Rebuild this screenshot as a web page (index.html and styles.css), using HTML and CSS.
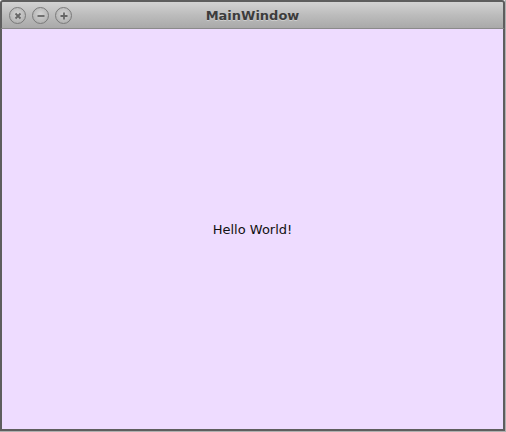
FILE: index.html
```html
<!DOCTYPE html>
<html>
<head>
<meta charset="utf-8">
<link rel="stylesheet" href="styles.css">
</head>
<body>
<div class="window">
  <div class="titlebar">
    <div class="buttons">
      <span class="btn">
        <svg width="16" height="16" viewBox="0 0 16 16"><path d="M5.5 5.5 L10.5 10.5 M10.5 5.5 L5.5 10.5" stroke="#666" stroke-width="1.8"/></svg>
      </span>
      <span class="btn">
        <svg width="16" height="16" viewBox="0 0 16 16"><path d="M4.5 8 H11.5" stroke="#666" stroke-width="1.8"/></svg>
      </span>
      <span class="btn">
        <svg width="16" height="16" viewBox="0 0 16 16"><path d="M4.5 8 H11.5 M8 4.5 V11.5" stroke="#666" stroke-width="1.8"/></svg>
      </span>
    </div>
    <div class="title">MainWindow</div>
  </div>
  <div class="content">
    <div class="label">Hello World!</div>
  </div>
</div>
</body>
</html>
```
FILE: styles.css
```css
html, body {
  margin: 0;
  padding: 0;
  width: 506px;
  height: 432px;
  overflow: hidden;
  background: #ffffff;
}
.window {
  width: 506px;
  height: 432px;
  box-sizing: border-box;
  border: 1px solid #b0b0b0;
  border-top: none;
  border-left: none;
  display: flex;
  flex-direction: column;
}
.titlebar {
  flex: none;
  position: relative;
  background: linear-gradient(#d3d3d3, #bcbcbc 50%, #a9a9a9);
  border: 2px solid #5e5e5e;
  border-bottom: 1px solid #8a8a8a;
  border-radius: 3px 3px 0 0;
  box-sizing: border-box;
  height: 29px;
  display: flex;
  align-items: center;
  justify-content: center;
}
.buttons {
  position: absolute;
  left: 7px;
  top: 5px;
  display: flex;
  gap: 6px;
}
.btn {
  width: 17px;
  height: 17px;
  box-sizing: border-box;
  border-radius: 50%;
  border: 1.5px solid #7a7a7a;
  background: radial-gradient(circle at 50% 40%, #d4d4d4, #a8a8a8);
  display: flex;
  align-items: center;
  justify-content: center;
}
.btn svg {
  display: block;
  flex: none;
}
.title {
  font-family: "DejaVu Sans", sans-serif;
  font-weight: bold;
  font-size: 13px;
  color: #3c3c3c;
  text-shadow: 0 1px 0 rgba(255,255,255,0.35);
}
.content {
  flex: 1;
  background: #eedcff;
  border: 2px solid #5e5e5e;
  border-top: none;
  display: flex;
  align-items: center;
  justify-content: center;
}
.label {
  font-family: "DejaVu Sans", sans-serif;
  font-size: 13px;
  color: #111;
  margin-top: 1px;
}
```
